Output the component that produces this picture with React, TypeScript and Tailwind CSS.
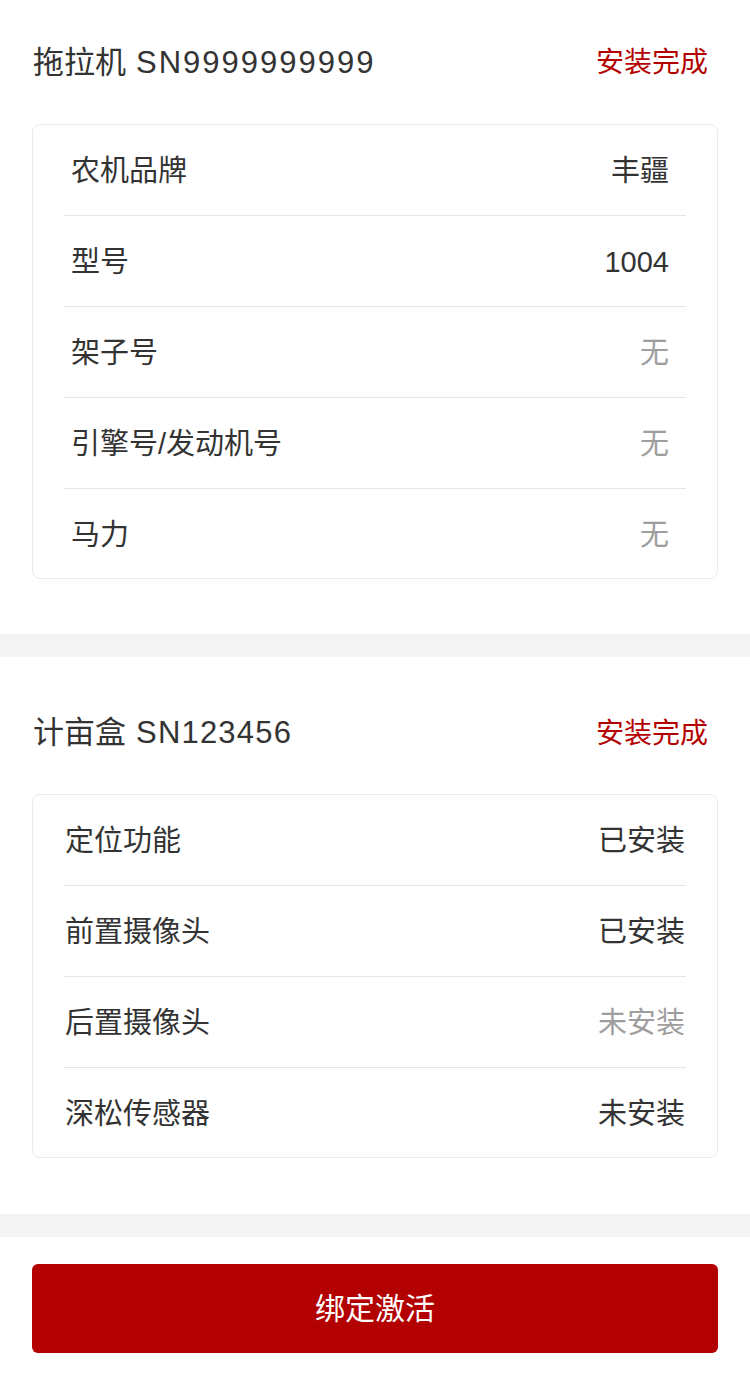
import React from "react";

type Row = { label: string; value: string; muted?: boolean };

const tractorRows: Row[] = [
  { label: "农机品牌", value: "丰疆" },
  { label: "型号", value: "1004" },
  { label: "架子号", value: "无", muted: true },
  { label: "引擎号/发动机号", value: "无", muted: true },
  { label: "马力", value: "无", muted: true },
];

const boxRows: Row[] = [
  { label: "定位功能", value: "已安装" },
  { label: "前置摄像头", value: "已安装" },
  { label: "后置摄像头", value: "未安装", muted: true },
  { label: "深松传感器", value: "未安装" },
];

function Card({ rows, inner }: { rows: Row[]; inner: "a" | "b" }) {
  return (
    <div className="mx-[32px] rounded-[8px] border border-[#ebebeb] bg-white px-[31px]">
      {rows.map((r, i) => {
        const last = i === rows.length - 1;
        return (
          <div
            key={r.label}
            className={
              "flex items-center justify-between pt-[4px] " +
              (last ? "h-[89px] " : "h-[91px] border-b border-[#e6e6e6] ") +
              (inner === "a" ? "pl-[7px] pr-[17px]" : "pl-[1px] pr-[1px]")
            }
          >
            <span className="text-[29px] text-[#333333]">{r.label}</span>
            <span className={"text-[29px] " + (r.muted ? "text-[#9e9e9e]" : "text-[#333333]")}>
              {r.value}
            </span>
          </div>
        );
      })}
    </div>
  );
}

function Header({ name, sn, tracking }: { name: string; sn: string; tracking: string }) {
  return (
    <div className="flex items-center justify-between pl-[33px] pr-[42px] pt-[2px]">
      <span className="text-[31px] text-[#333333]">
        {name}
        <span className={"ml-[10px] " + tracking}>{sn}</span>
      </span>
      <span className="text-[28px] text-[#b30000]">安装完成</span>
    </div>
  );
}

export default function App() {
  return (
    <div
      className="min-h-[1380px] w-[750px] bg-white"
      style={{ fontFamily: '"Liberation Sans", "Noto Sans CJK SC", sans-serif' }}
    >
      <section className="pb-[55px]">
        <div className="flex h-[124px] items-center">
          <div className="w-full">
            <Header name="拖拉机" sn="SN9999999999" tracking="tracking-[2px]" />
          </div>
        </div>
        <Card rows={tractorRows} inner="a" />
      </section>
      <div className="h-[23px] bg-[#f4f4f4]" />
      <section className="pb-[56px] pt-[14px]">
        <div className="flex h-[123px] items-center">
          <div className="w-full">
            <Header name="计亩盒" sn="SN123456" tracking="tracking-[1.2px]" />
          </div>
        </div>
        <Card rows={boxRows} inner="b" />
      </section>
      <div className="h-[23px] bg-[#f4f4f4]" />
      <div className="px-[32px] py-[27px]">
        <button className="flex h-[89px] w-full items-center justify-center rounded-[6px] bg-[#b30000] text-[30px] text-white">
          绑定激活
        </button>
      </div>
    </div>
  );
}
